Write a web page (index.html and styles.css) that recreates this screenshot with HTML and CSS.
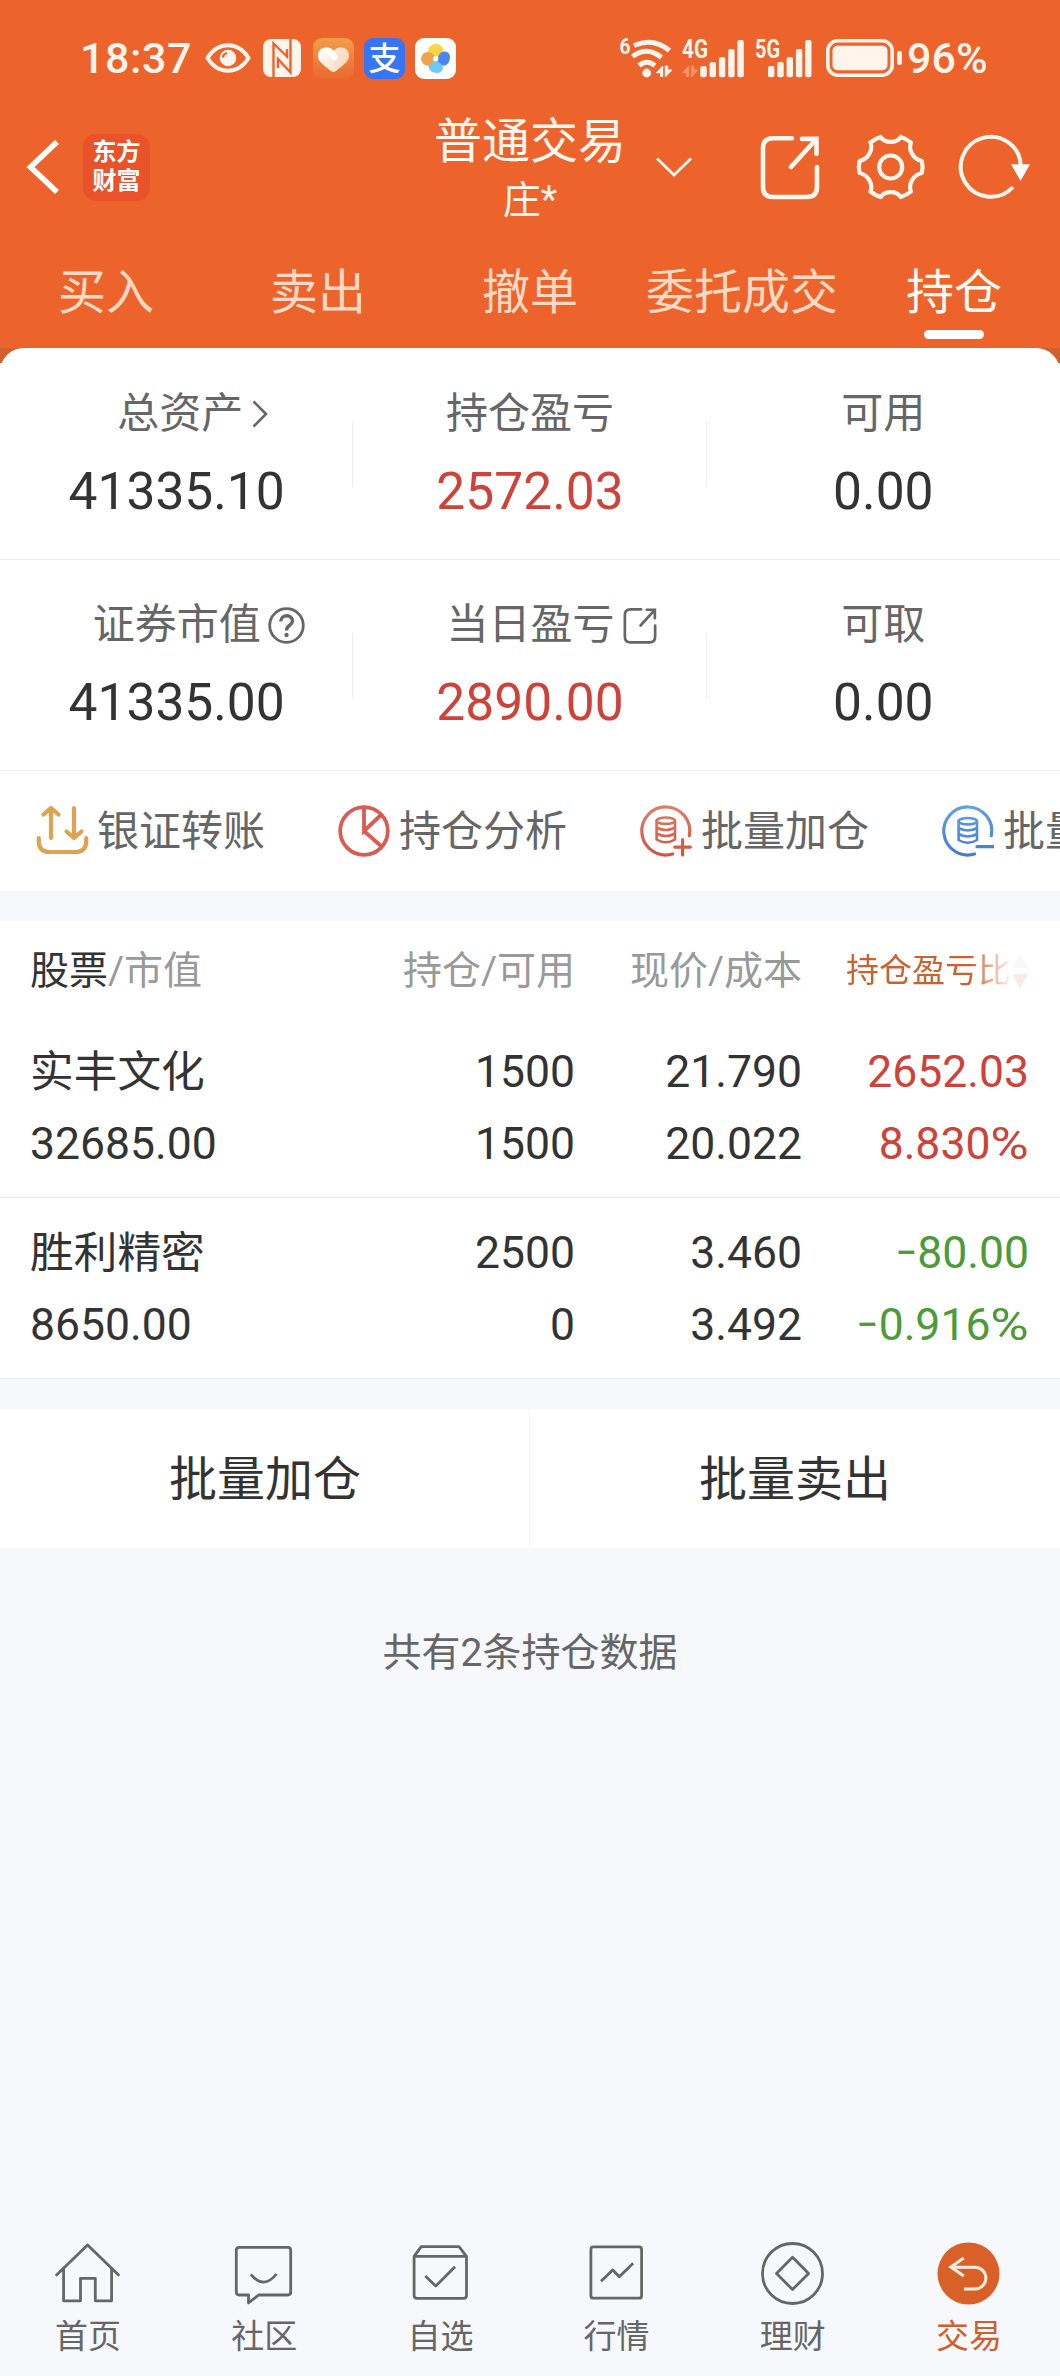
FILE: index.html
```html
<!DOCTYPE html>
<html lang="zh-CN">
<head>
<meta charset="utf-8">
<title>持仓</title>
<link rel="stylesheet" href="styles.css">
</head>
<body>
<div class="page">
  <header class="top">
    <div class="status">
      <span class="clock">18:37</span>
      <svg class="s-eye" width="46" height="30" viewBox="0 0 46 30"><path d="M2.5 15C8 6 15 2.3 23 2.3S38 6 43.5 15C38 24 31 27.7 23 27.7S8 24 2.5 15Z" fill="none" stroke="#fff4ec" stroke-width="4" stroke-linejoin="round"/><circle cx="23" cy="15" r="8.3" fill="#fff4ec"/><path d="M17.8 14.5A5.5 5.5 0 0 1 22 10" fill="none" stroke="#ec632b" stroke-width="2.2"/></svg>
      <svg class="s-nfc" width="38" height="38" viewBox="0 0 38 38"><rect width="38" height="38" rx="8" fill="#fff4ec"/><path d="M10.500 38V4.500L24 17.500V10M27.500 0V33.500L15 20V29" fill="none" stroke="#ec632b" stroke-width="2.400"/></svg>
      <svg class="s-heart" width="41" height="41" viewBox="0 0 41 41"><defs><linearGradient id="hb" x1="0" y1="0" x2="0" y2="1"><stop offset="0" stop-color="#f19e4a"/><stop offset="1" stop-color="#e9692f"/></linearGradient><linearGradient id="hf" x1="0" y1="0" x2="1" y2="0.3"><stop offset="0" stop-color="#fff"/><stop offset="1" stop-color="#fbd6bd"/></linearGradient></defs><rect width="41" height="41" rx="9" fill="url(#hb)"/><path d="M20.500 13C17 7.500 5 8 5 17.500C5 23 8 25 18 33Q20.500 35 23 33C33 25 36 23 36 17.500C36 8 24 7.500 20.500 13Z" fill="url(#hf)"/><path d="M10 13L20 22Q24 23 25 19L19 11Q13 7 10 13Z" fill="#fff"/></svg>
      <svg class="s-pay" width="41" height="41" viewBox="0 0 41 41"><rect width="41" height="41" rx="9" fill="#3775f5"/><text x="20.500" y="32" text-anchor="middle" font-size="32" font-weight="500" fill="#fff">支</text></svg>
      <svg class="s-wheel" width="41" height="41" viewBox="0 0 41 41"><rect width="41" height="41" rx="9" fill="#fff"/><path d="M19 19C10 17 12 7 20 6C28 6 30 12 26 18Z" fill="#f7d547"/><path d="M23 19C26 10 36 13 35 20C34 28 28 30 22 25Z" fill="#4b86ec"/><path d="M21 23C31 26 29 35 22 35C13 34 11 28 17 22Z" fill="#6ccbf6"/><path d="M19 22C15 32 6 27 6 20C8 13 14 12 20 18Z" fill="#eda44b"/><circle cx="20.700" cy="20.700" r="2.600" fill="#fff"/></svg>
      <svg class="s-wifi" width="56" height="42" viewBox="0 0 56 42"><text x="1.500" y="17" font-size="22" font-weight="700" textLength="11" lengthAdjust="spacingAndGlyphs" fill="#fff4ec">6</text><g fill="none" stroke="#fff4ec" stroke-width="5"><path d="M16 8.500Q35 0 51.500 13.500M14.500 19.500Q29 8.500 43.500 20.500M21 28.500Q28.700 22 37 28.500"/></g><circle cx="28.700" cy="36" r="4.400" fill="#fff4ec"/><path d="M44.700 29L38.500 35.700H42.500V39.500H44.700ZM47.300 40L54 33H49.700V29H47.300Z" fill="#fff4ec" stroke="#fff4ec"/></svg>
      <svg class="s-4g" width="62" height="42" viewBox="0 0 62 42"><text x="0" y="21" font-size="25" font-weight="700" textLength="26" lengthAdjust="spacingAndGlyphs" fill="#fff4ec">4G</text><g fill="#fff4ec"><rect x="18.300" y="29" width="6.400" height="11.300" rx="2"/><rect x="27.600" y="25" width="6.400" height="15.300" rx="2"/><rect x="36.900" y="20" width="6.400" height="20.300" rx="2"/><rect x="46.200" y="12" width="6.400" height="28.300" rx="2"/><rect x="55.400" y="3" width="6.400" height="37.300" rx="2"/></g><path d="M6.700 29L.5 35.700H4.500V39.500H6.700ZM9.300 40L16 33H11.700V29H9.300Z" fill="#fb9264" stroke="#fb9264"/></svg>
      <svg class="s-5g" width="57" height="42" viewBox="0 0 57 42"><text x="0" y="21" font-size="25" font-weight="700" textLength="25" lengthAdjust="spacingAndGlyphs" fill="#fff4ec">5G</text><g fill="#fff4ec"><rect x="13" y="29" width="6.400" height="11.300" rx="2"/><rect x="22.300" y="25" width="6.400" height="15.300" rx="2"/><rect x="31.600" y="20" width="6.400" height="20.300" rx="2"/><rect x="40.900" y="12" width="6.400" height="28.300" rx="2"/><rect x="50.100" y="3" width="6.400" height="37.300" rx="2"/></g></svg>
      <svg class="s-bat" width="76" height="38" viewBox="0 0 76 38"><rect x="1.800" y="1.800" width="64.400" height="34.400" rx="10" fill="none" stroke="#fff4ec" stroke-width="3.600"/><rect x="6.500" y="6.700" width="55" height="24.600" rx="5" fill="#fff4ec"/><rect x="71" y="12" width="5" height="14" rx="2" fill="#fff4ec"/></svg>
      <span class="percent">96%</span>
    </div>

    <div class="bar">
      <div class="bar-left">
        <svg width="34" height="58" viewBox="0 0 34 58"><path d="M31 4L4.500 29L31 54" fill="none" stroke="#fff" stroke-width="5.600"/></svg>
        <div class="brand"><span>东方</span><span>财富</span></div>
      </div>
      <div class="title"><span class="title-main">普通交易</span><span class="title-sub">庄*</span></div>
      <div class="bar-right">
        <svg class="i-down" width="38" height="22" viewBox="0 0 38 22"><path d="M2 2.500L19 19L36 2.500" fill="none" stroke="#fff6ee" stroke-width="2.800"/></svg>
        <svg class="i-share" width="62" height="66" viewBox="0 0 62 66" fill="none" stroke="#fff6ee" stroke-width="4.600" stroke-linecap="round"><path d="M33 4.200H14Q4 4.200 4 14V53Q4 63 14 63H48Q58 63 58 53V33M43 4.900H57.500V20M56.500 6L32 33"/></svg>
        <svg class="i-gear" width="69" height="66" viewBox="0 0 69 66" fill="none" stroke="#fff6ee" stroke-width="4.200" stroke-linejoin="round"><path d="M24.600 3C29 9.500 40.400 9.500 44.800 3Q50.500 4.800 55 8.500C52 15.500 57 25 65.800 27Q67.400 33 65.800 39C57 41 52 50.500 55 57.500Q50.500 61.200 44.800 63C40.400 56.500 29 56.500 24.600 63Q19 61.200 14.400 57.500C17.400 50.500 12.400 41 3.600 39Q2 33 3.600 27C12.400 25 17.400 15.500 14.400 8.500Q19 4.800 24.600 3Z"/><circle cx="34.700" cy="33" r="11.500"/></svg>
        <svg class="i-refresh" width="72" height="66" viewBox="0 0 72 66"><path d="M54 53A30 30 0 1 1 61.800 32" fill="none" stroke="#fff6ee" stroke-width="4"/><path d="M52 30.300H71L61.500 47Z" fill="#fff"/></svg>
      </div>
    </div>

    <nav class="tabs">
      <span class="tab">买入</span><span class="tab">卖出</span><span class="tab">撤单</span><span class="tab">委托成交</span><span class="tab active">持仓</span>
    </nav>
  </header>

  <section class="summary">
    <div class="sheet">
      <div class="stats stats-first">
        <div class="stat"><div class="label label-link">总资产<svg class="ext" width="16" height="30" viewBox="0 0 16 30"><path d="M1.500 2.500L14 15L1.500 27.500" fill="none" stroke="#666" stroke-width="2.600"/></svg></div><div class="value">41335.10</div></div>
        <div class="stat"><div class="label">持仓盈亏</div><div class="value up">2572.03</div></div>
        <div class="stat"><div class="label">可用</div><div class="value">0.00</div></div>
      </div>
      <div class="stats">
        <div class="stat"><div class="label">证券市值<svg class="ext" width="37" height="37" viewBox="0 0 37 37" fill="none" stroke="#666" stroke-width="2.800"><circle cx="18.500" cy="18.500" r="16.800"/><path d="M12.700 14.500C13 7 24.500 7 24.500 14C24.500 18.500 18.500 18 18.500 23.500" stroke-width="3.400"/><circle cx="18.500" cy="28" r="2.200" fill="#666" stroke="none"/></svg></div><div class="value">41335.00</div></div>
        <div class="stat"><div class="label">当日盈亏<svg class="ext" width="36" height="37" viewBox="0 0 62 66" fill="none" stroke="#666" stroke-width="4.800" stroke-linecap="round"><path d="M33 4.200H14Q4 4.200 4 14V53Q4 63 14 63H48Q58 63 58 53V33M43 4.900H57.500V20M56.500 6L32 33"/></svg></div><div class="value up">2890.00</div></div>
        <div class="stat"><div class="label">可取</div><div class="value">0.00</div></div>
      </div>
      <div class="actions">
        <div class="action"><svg width="52" height="52" viewBox="0 0 52 52" fill="none" stroke="#dea250" stroke-width="4.200" stroke-linecap="round" stroke-linejoin="round"><path d="M2.800 33V36Q2.800 47 13.500 47H39.500Q50.200 47 50.200 36V33M15 33V3M7.500 9.500L15 3L22.500 9.500M38 3V33M30.500 26.500L38 33L45.500 26.500"/></svg><span>银证转账</span></div>
        <div class="action"><svg width="52" height="52" viewBox="0 0 52 52" fill="none" stroke="#d95b54" stroke-width="3.800"><circle cx="26" cy="26" r="23.800"/><path d="M26 2V26L43.500 9.500M26 26L43.500 41.500"/></svg><span>持仓分析</span></div>
        <div class="action"><svg width="52" height="52" viewBox="0 0 52 52" fill="none" stroke="url(#rg)" stroke-width="3.200" stroke-linecap="round"><defs><linearGradient id="rg" gradientUnits="userSpaceOnUse" x1="0" y1="0" x2="0" y2="52"><stop offset="0" stop-color="#dc8068"/><stop offset="1" stop-color="#d5503f"/></linearGradient></defs><path d="M49.300 30.700A24 24 0 1 0 32.500 49M42.600 34.500V50M34.800 42.100H50.400"/><g stroke-width="2.600"><ellipse cx="25.800" cy="15.700" rx="9.200" ry="3.200"/><path d="M16.600 15.700V34.500Q25.800 40 35 34.500V15.700M16.600 22.500Q25.800 27.500 35 22.500M16.600 28.500Q25.800 33.500 35 28.500"/></g></svg><span>批量加仓</span></div>
        <div class="action"><svg width="52" height="52" viewBox="0 0 52 52" fill="none" stroke="url(#bg)" stroke-width="3.200" stroke-linecap="round"><defs><linearGradient id="bg" gradientUnits="userSpaceOnUse" x1="0" y1="0" x2="0" y2="52"><stop offset="0" stop-color="#64a2df"/><stop offset="1" stop-color="#4479cd"/></linearGradient></defs><path d="M49.300 30.700A24 24 0 1 0 32.500 49M35 41.600H50.400V41.700H35"/><g stroke-width="2.600"><ellipse cx="25.800" cy="16.200" rx="9.200" ry="3.200"/><path d="M16.600 16.200V35Q25.800 40.500 35 35V16.200M16.600 23Q25.800 28 35 23M16.600 29Q25.800 34 35 29"/></g></svg><span>批量卖出</span></div>
      </div>
    </div>
  </section>

  <section class="holdings">
    <div class="thead">
      <div><span class="strong">股票</span>/市值</div><div class="num">持仓/可用</div><div class="num">现价/成本</div>
      <div class="sort"><span>持仓盈亏比</span><svg width="18" height="36" viewBox="0 0 18 36"><path d="M9 1L17 15H1Z" fill="#f8f8f9"/><path d="M1 21H17L9 35Z" fill="#fbeae1"/></svg></div>
    </div>
    <div class="trow">
      <div class="name">实丰文化</div><div class="num">1500</div><div class="num">21.790</div><div class="num up">2652.03</div>
      <div>32685.00</div><div class="num">1500</div><div class="num">20.022</div><div class="num up">8.830<span class="pct">%</span></div>
    </div>
    <div class="trow">
      <div class="name">胜利精密</div><div class="num">2500</div><div class="num">3.460</div><div class="num down"><span class="minus">−</span>80.00</div>
      <div>8650.00</div><div class="num">0</div><div class="num">3.492</div><div class="num down"><span class="minus">−</span>0.916<span class="pct">%</span></div>
    </div>
  </section>

  <div class="batch"><span>批量加仓</span><span>批量卖出</span></div>
  <p class="hint">共有2条持仓数据</p>

  <nav class="dock">
    <div class="dock-item"><svg width="68" height="64" viewBox="0 0 68 64"><path d="M1.800 33.700L33.600 3L65.300 33.700M9.600 27V58.800H26.500V36.300H41.300V58.800H57.600V27"/></svg><span>首页</span></div>
    <div class="dock-item"><svg width="68" height="64" viewBox="0 0 68 64"><path d="M9.300 5.300H57.700Q60.700 5.300 60.700 8.300V50Q60.700 53 57.700 53H28.600L18.500 61V53H9.300Q6.300 53 6.300 50V8.300Q6.300 5.300 9.300 5.300ZM20.800 32.300Q33.700 48 46.500 32"/></svg><span>社区</span></div>
    <div class="dock-item"><svg width="68" height="64" viewBox="0 0 68 64"><path d="M8.100 14.300L15.200 4.600H53L60.500 14.300V53.500Q60.500 56.300 57.500 56.300H11Q8.100 56.300 8.100 53.500ZH60.500M19.300 34L29.800 44L49 24.700"/></svg><span>自选</span></div>
    <div class="dock-item"><svg width="68" height="64" viewBox="0 0 68 64"><rect x="7.900" y="4.900" width="50.700" height="51.300" rx="2.500"/><path d="M18 39.300L29.800 28L36.300 34.700L50.100 21.300"/></svg><span>行情</span></div>
    <div class="dock-item"><svg width="68" height="64" viewBox="0 0 68 64"><circle cx="33.500" cy="31.500" r="30"/><path d="M33.500 15.300L49.600 31.400L33.500 47.500L17.500 31.400Z"/></svg><span>理财</span></div>
    <div class="dock-item current"><svg width="68" height="64" viewBox="0 0 68 64"><circle class="disc" cx="33.500" cy="31.500" r="31"/><path class="back" d="M28.800 16L15.800 25L28.800 34M15.800 25.200H40A10.900 10.900 0 0 1 40 47H29"/></svg><span>交易</span></div>
  </nav>
</div>
</body>
</html>
```

FILE: styles.css
```css
* { box-sizing: border-box; }
body {
  margin: 0;
  font-family: Roboto, "Noto Sans CJK SC", sans-serif;
  background: #f7f8fb;
  color: #333;
}
svg { display: block; flex: none; overflow: visible; }
.page {
  width: 1060px;
  height: 2376px;
  display: flex;
  flex-direction: column;
  overflow: hidden;
}

/* header */
.top { height: 348px; background: #ec632b; color: #fff6ee; }
.status { height: 116px; display: flex; align-items: center; padding-left: 80px; color: #fff4ec; }
.clock, .percent { font-size: 43px; font-weight: 500; line-height: 60px; white-space: nowrap; }
.clock { width: 125px; letter-spacing: 0.6px; }
.percent { margin-left: 5px; }
.s-nfc { margin-left: 12px; }
.s-heart { margin-left: 12px; }
.s-pay, .s-wheel { margin-left: 10px; }
.s-wifi { margin-left: 162px; }
.s-4g { margin-left: 8px; }
.s-5g { margin-left: 11px; }
.s-bat { margin-left: 14px; }

.bar { height: 102px; display: grid; grid-template-columns: 1fr auto 1fr; grid-template-rows: 102px; align-items: center; }
.bar-left { display: flex; align-items: center; padding-left: 26px; gap: 23px; }
.brand {
  width: 67px; height: 67px; border-radius: 13px; background: #ea5329; color: #fff;
  display: flex; flex-direction: column; align-items: center; justify-content: center;
  font-size: 24px; font-weight: 700; line-height: 29px;
}
.title { margin-top: 8px; display: flex; flex-direction: column; align-items: center; line-height: 58px; }
.title-main { font-size: 48px; }
.title-sub { font-size: 38px; }
.bar-right { display: flex; align-items: center; }
.i-down { margin-left: 29px; }
.i-share { margin-left: 66px; }
.i-gear { margin-left: 35px; }
.i-refresh { margin-left: 34px; }

.tabs { height: 130px; display: grid; grid-template-columns: repeat(5, 1fr); }
.tab {
  display: flex; flex-direction: column; align-items: center;
  padding-top: 44px; font-size: 48px; line-height: 62px; color: #ffd9c3;
}
.tab.active { color: #fffaf5; }
.tab.active::after { content: ""; width: 60px; height: 9px; margin-top: 6px; border-radius: 5px; background: #fff; }

/* account summary */
.summary { background: linear-gradient(#d2602c 15px, #fff 15px); }
.sheet { background: #fff; border-radius: 24px 24px 0 0; overflow: hidden; }
.stats { height: 211px; display: grid; grid-template-columns: repeat(3, 1fr); border-bottom: 1px solid #ededed; }
.stat { position: relative; display: flex; flex-direction: column; align-items: center; padding-top: 35px; }
.stats-first { height: 212px; }
.stats-first .stat { padding-top: 36px; }
.stat + .stat::before { content: ""; position: absolute; left: -1px; top: 73px; width: 1px; height: 66px; background: #ededed; }
.label { display: flex; align-items: center; font-size: 42px; line-height: 60px; color: #666; }
.label .ext { margin-left: 7px; margin-right: -44px; }
.label-link .ext { margin-left: 9px; margin-right: -32px; }
.value { margin-top: 18px; font-size: 51.500px; line-height: 60px; }
.up { color: #cd433a; }
.down { color: #4c9a38; }

.actions { height: 120px; display: flex; align-items: center; gap: 73px; padding-left: 36px; overflow: hidden; }
.action { flex: none; display: flex; align-items: center; gap: 9px; font-size: 42px; line-height: 60px; color: #666; white-space: nowrap; }
.action span { padding-top: 1px; }

/* holdings table */
.holdings { margin-top: 30px; background: #fff; }
.thead, .trow { display: grid; grid-template-columns: 300px 245px 227px 227px; padding: 0 31px 0 30px; }
.num { text-align: right; white-space: nowrap; }
.thead { height: 96px; font-size: 39px; line-height: 100px; color: #999; }
.strong { color: #333; }
.sort { display: flex; align-items: center; justify-content: flex-end; font-size: 33px; }
.sort span {
  color: transparent; background: linear-gradient(90deg, #c9622f 75%, #c9622f10 100%);
  background-clip: text; -webkit-background-clip: text; white-space: nowrap;
}
.trow { height: 181px; padding-top: 19px; border-bottom: 1px solid #ececee; font-size: 44.500px; line-height: 72px; grid-auto-rows: 72px; }
.name { font-size: 43.700px; }
.pct { display: inline-block; margin-left: 6px; transform: scaleX(1.18); transform-origin: right; }
.minus { display: inline-block; transform: scaleX(0.87); transform-origin: right; }

.batch { margin-top: 30px; height: 139px; flex: none; background: #fff; display: grid; grid-template-columns: 1fr 1fr; text-align: center; font-size: 48px; line-height: 141px; }
.batch span + span { border-left: 1px solid #f6f6f8; margin-left: -1px; }
.hint { margin: 75px 0 0; text-align: center; font-size: 39px; line-height: 60px; color: #666; }

/* bottom navigation */
.dock { margin-top: auto; height: 134px; padding-right: 3px; display: grid; grid-template-columns: repeat(6, 1fr); }
.dock-item { display: flex; flex-direction: column; align-items: center; font-size: 33px; line-height: 44px; color: #666; }
.dock-item svg { fill: none; stroke: #666; stroke-width: 2.800px; stroke-linejoin: round; }
.dock-item span { margin-top: 9px; }
.dock-item.current { color: #cf602e; }
.dock-item .disc { fill: #d96129; stroke: none; }
.dock-item .back { stroke: #ffeede; stroke-width: 3px; stroke-linejoin: miter; }
```
